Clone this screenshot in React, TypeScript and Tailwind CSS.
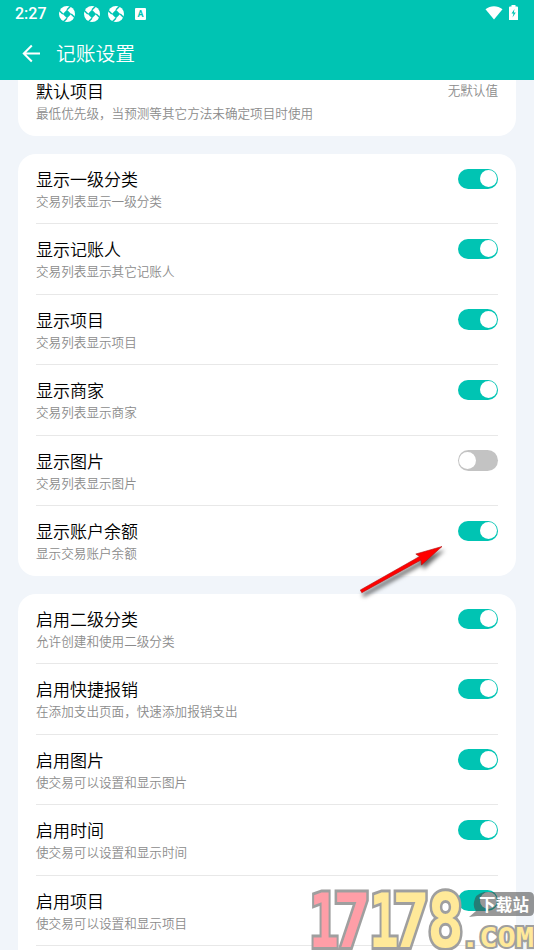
type Item = {
  title: string;
  desc: string;
  on: boolean;
};

const displayItems: Item[] = [
  { title: "显示一级分类", desc: "交易列表显示一级分类", on: true },
  { title: "显示记账人", desc: "交易列表显示其它记账人", on: true },
  { title: "显示项目", desc: "交易列表显示项目", on: true },
  { title: "显示商家", desc: "交易列表显示商家", on: true },
  { title: "显示图片", desc: "交易列表显示图片", on: false },
  { title: "显示账户余额", desc: "显示交易账户余额", on: true },
];

const enableItems: Item[] = [
  { title: "启用二级分类", desc: "允许创建和使用二级分类", on: true },
  { title: "启用快捷报销", desc: "在添加支出页面，快速添加报销支出", on: true },
  { title: "启用图片", desc: "使交易可以设置和显示图片", on: true },
  { title: "启用时间", desc: "使交易可以设置和显示时间", on: true },
  { title: "启用项目", desc: "使交易可以设置和显示项目", on: true },
];

export default function App() {
  return (
    <div className="relative flex h-[950px] w-[534px] flex-col overflow-hidden bg-[#f1f5fa] font-['Roboto','Noto_Sans_CJK_SC',sans-serif]">
      <header className="z-10 h-20 shrink-0 bg-[#00c4b3] text-white">
        <StatusBar />
        <div className="flex h-[51px] items-center pl-[22px]">
          <BackIcon />
          <h1 className="mt-[2px] ml-[15px] text-[19.8px] leading-[28px] font-[350]">记账设置</h1>
        </div>
      </header>
      <main className="flex min-h-0 flex-1 flex-col gap-[18px] overflow-hidden px-[18px]">
        <section className="flex h-14 shrink-0 justify-between rounded-b-[18px] bg-white px-[18px]">
          <Label title="默认项目" desc="最低优先级，当预测等其它方法未确定项目时使用" />
          <span className="mt-[2px] text-[12.6px] leading-[18px] font-[350] text-[#8c8c8c]">无默认值</span>
        </section>
        <SettingCard items={displayItems} />
        <SettingCard items={enableItems} more />
      </main>
      <Arrow />
      <Watermark />
    </div>
  );
}

function SettingCard({ items, more }: { items: Item[]; more?: boolean }) {
  return (
    <section className="shrink-0 rounded-[18px] bg-white px-[18px]">
      {items.map((item) => (
        <div key={item.title} className="flex h-[70.5px] justify-between border-b border-[#e8e8e8] pt-[14px] first:h-[70px] last:h-[70px] last:border-b-0">
          <Label title={item.title} desc={item.desc} />
          <Toggle on={item.on} />
        </div>
      ))}
      {more && <div className="h-[70px]" />}
    </section>
  );
}

function Label({ title, desc }: { title: string; desc: string }) {
  return (
    <div className="flex flex-col pt-[0.4px] font-[350]">
      <span className="text-[17px] leading-[24px] text-black">{title}</span>
      <span className="text-[12.6px] leading-[20px] text-[#8c8c8c]">{desc}</span>
    </div>
  );
}

function Toggle({ on }: { on: boolean }) {
  return (
    <span className={on ? "mt-[0.5px] flex h-[20.5px] w-[40.5px] items-center justify-end rounded-full bg-[#00c4b3] px-[1.5px]" : "mt-[0.5px] flex h-[20.5px] w-[40.5px] items-center rounded-full bg-[#c3c3c3] px-[1.5px]"}>
      <span className="size-[17px] rounded-full bg-white" />
    </span>
  );
}

function StatusBar() {
  return (
    <div className="flex h-7 items-center pr-4 pl-[15px]">
      <span className="w-[44px] text-[16px] leading-[20px] font-medium">2:27</span>
      <div className="flex gap-[8.5px]">
        <Aperture />
        <Aperture />
        <Aperture />
      </div>
      <span className="ml-[11px] flex h-[12px] w-[11px] items-center justify-center rounded-[1px] bg-white text-[9px] leading-none font-bold text-[#00c4b3]">A</span>
      <svg className="-mt-[3px] ml-auto" width="18" height="14" viewBox="0 0 18 14" fill="#fff">
        <path d="M0.5 3.2C5.5-.8 12.5-.8 17.5 3.2L9 13.5Z" />
      </svg>
      <svg className="-mt-[3px] ml-[6px]" width="9" height="15" viewBox="0 0 9 15">
        <path d="M2.5 0h4v1.5H8q1 0 1 1V15H0V2.5q0-1 1-1h1.5z" fill="#fff" />
        <path d="M5.5 4 2.5 8.5h2L3.5 12.5 6.8 7.5h-2z" fill="#00c4b3" />
      </svg>
    </div>
  );
}

// disc cut into four blades around a hollow diamond
function Aperture() {
  return (
    <svg className="-mt-px" width="16" height="16" viewBox="0 0 16 16">
      <circle cx="8" cy="8" r="8" fill="#fff" />
      <path d="M8 3.8 12.2 8 8 12.2 3.8 8Z" fill="#00c4b3" />
      <path d="M8 3.8 12.5-.7M12.2 8l4.500 4.500M8 12.200l-4.500 4.500M3.800 8-.7 3.500" stroke="#00c4b3" strokeWidth="1.5" />
    </svg>
  );
}

function BackIcon() {
  return (
    <svg width="19" height="19" viewBox="0 0 19 19" fill="none" stroke="#fff" strokeWidth="2">
      <path d="M18 9.5H2M9.8 1.5 1.8 9.5l8 8" />
    </svg>
  );
}

function Arrow() {
  return (
    <svg className="absolute top-[536px] left-[350px] z-20 drop-shadow-[2px_4px_2px_rgba(0,0,0,0.6)]" width="100" height="66" viewBox="350 536 100 66">
      <path d="M442 546.5 421.500 565 421 560 361.800 592.700 360.300 590 419.500 556.500 415.800 554Z" fill="#f00" stroke="#b01010" strokeWidth="0.6" />
    </svg>
  );
}

const digits = [
  { char: "1", x: 309, width: 30, fill: "#ff9ea7" },
  { char: "7", x: 333, width: 38, fill: "#ff9ea7" },
  { char: "1", x: 369, width: 30, fill: "#ffe999" },
  { char: "7", x: 392, width: 38, fill: "#ffe999" },
  { char: "8", x: 427, width: 37, fill: "#ffe999" },
];

function Watermark() {
  return (
    <svg className="absolute top-[880px] left-[300px] z-20" width="234" height="70" viewBox="300 880 234 70" fontFamily="DejaVu Sans Mono, monospace" fontWeight="700">
      <g stroke="#9f9f9f" strokeWidth="6" style={{ paintOrder: "stroke" }}>
        {digits.map((d) => (
          <text key={d.x} x={d.x} y="947" fontSize="74" fill={d.fill} textLength={d.width} lengthAdjust="spacingAndGlyphs">
            {d.char}
          </text>
        ))}
      </g>
      <text x="461" y="947" fontSize="27" fill="#ffe999" stroke="#9f9f9f" strokeWidth="4" textLength="73" lengthAdjust="spacingAndGlyphs" style={{ paintOrder: "stroke" }}>
        .COM
      </text>
      <path d="M484 892h45q5 0 5 5v14q0 5-5 5h-52l-8 1 7-6q-3-3-2-9 1-8 10-10z" fill="#444" fillOpacity="0.55" />
      <text x="479" y="911" fontSize="16.5" fill="#fff" fontFamily="Noto Sans CJK SC, sans-serif" textLength="50">
        下载站
      </text>
    </svg>
  );
}
